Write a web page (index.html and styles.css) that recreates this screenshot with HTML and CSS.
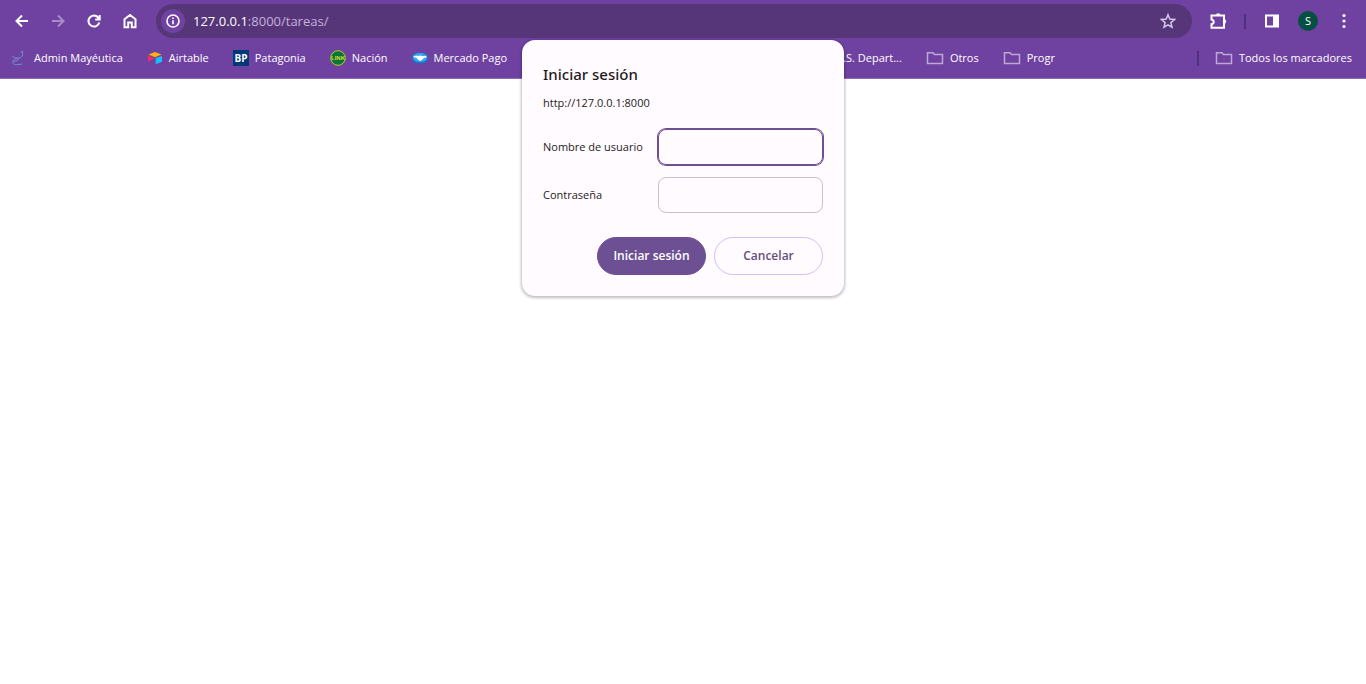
FILE: index.html
```html
<!DOCTYPE html>
<html lang="es">
<head>
<meta charset="utf-8">
<title>Iniciar sesión</title>
<link rel="stylesheet" href="styles.css">
</head>
<body>
<header class="chrome">
  <div class="toolbar">
    <nav class="nav">
      <button class="icon-btn" aria-label="Atrás"><svg viewBox="0 0 16 16"><path d="M14 8H3M8 2.500 2.500 8 8 13.500"/></svg></button>
      <button class="icon-btn dim" aria-label="Adelante"><svg viewBox="0 0 16 16"><path d="M2 8h11M8 2.500 13.500 8 8 13.500"/></svg></button>
      <button class="icon-btn" aria-label="Recargar"><svg viewBox="0 0 16 16"><path d="M13.300 9.500A5.500 5.500 0 1 1 12.200 4.500L13.500 6M13.700 2v4.500H9.200"/></svg></button>
      <button class="icon-btn" aria-label="Inicio"><svg viewBox="0 0 16 16"><path d="M2.500 14.200V6.300L8 2l5.500 4.300v7.900H9.800V9.500H6.200v4.700z"/></svg></button>
    </nav>
    <div class="omnibox">
      <button class="info" aria-label="Información del sitio"><svg viewBox="0 0 16 16"><circle cx="8" cy="8" r="6"/><path d="M8 7.300v4M8 4.500v1.600"/></svg></button>
      <span class="url"><b>127.0.0.1</b>:8000/tareas/</span>
      <button class="icon-btn star" aria-label="Agregar a marcadores"><svg viewBox="0 0 16 16"><path d="m8 1.800 1.800 4.300 4.700.4-3.600 3.100 1.100 4.600L8 11.800l-4 2.400 1.100-4.600L1.500 6.500l4.700-.4z"/></svg></button>
    </div>
    <div class="tools">
      <button class="icon-btn puzzle" aria-label="Extensiones"><svg viewBox="0 0 18 18"><path d="M2.500 3.500H15v12.300H2.500v-3.600c3-.6 3-4.200 0-4.800z"/><path class="solid" d="M7 3.500a2.200 2.200 0 0 1 4.400 0zM15 7.300a2.200 2.200 0 0 1 0 4.400z"/></svg></button>
      <span class="rule"></span>
      <button class="icon-btn panel" aria-label="Panel lateral"><svg viewBox="0 0 16 16"><path d="M2 2.500h12v11H2z"/><path class="solid" d="M9 2h5.500v12H9z"/></svg></button>
      <button class="avatar" aria-label="Perfil">S</button>
      <button class="icon-btn menu" aria-label="Menú"><svg viewBox="0 0 16 16"><circle cx="8" cy="2.500" r="1.600"/><circle cx="8" cy="8" r="1.600"/><circle cx="8" cy="13.500" r="1.600"/></svg></button>
    </div>
  </div>
  <div class="bookmarks">
    <nav class="marks">
      <a href="#"><svg class="swirl" viewBox="0 0 18 16"><path d="M10.500 2.200l2.500-1.200M12.300 1.800c1.300 3.500-.8 6.200-4.300 6.400-2.500.1-4.800-.7-5.500-2.200M7.500 8.500C4.500 8.500 2 11 3 13.200c1 2 5 1.500 9 .8M9 8.300c-1 2-3 3.200-5.500 3.200"/></svg>Admin Mayéutica</a>
      <a href="#"><svg viewBox="0 0 16 16"><path fill="#fcb400" d="M1.500 4.500 8 2l6.500 2.500L8 7.200z"/><path fill="#18bfff" d="M8.700 8.300 15 6v5.800l-6.300 2.400z"/><path fill="#f82b60" d="M1 5.800l6.300 2.500L1 11.800z"/></svg>Airtable</a>
      <a href="#"><svg viewBox="0 0 16 16"><path fill="#003878" d="M0 0h16v16H0z"/><text class="bp" x="8" y="12" text-anchor="middle">BP</text></svg>Patagonia</a>
      <a href="#"><svg viewBox="0 0 16 16"><circle cx="8" cy="8" r="7.300" fill="#08753a" stroke="#b8cf28"/><text class="lk" x="8" y="10.200" text-anchor="middle">LINK</text></svg>Nación</a>
      <a href="#"><svg viewBox="0 0 16 16"><ellipse cx="8" cy="8" rx="8" ry="5.500" fill="#1377cf"/><ellipse cx="8" cy="7.500" rx="7.200" ry="4.500" fill="#39a5ec"/><path fill="#fff" d="M1.500 5.800c2 .6 3-.3 5 .2l1.500-.6 2 .5c2 .1 3 .4 4.500-.1l-.5 1.600c-2 0-2.500 1.400-3.800 2.300L8 10.900 5.800 9.500C4.800 8 4 7.400 2 7.300z"/></svg>Mercado Pago</a>
    </nav>
    <nav class="marks folders">
      <a href="#">U.S. Depart...</a>
      <a href="#"><svg class="folder" viewBox="0 0 18 16"><path d="M1.500 2.800h5.500l1.500 1.800h8v8.800h-15z"/></svg>Otros</a>
      <a href="#"><svg class="folder" viewBox="0 0 18 16"><path d="M1.500 2.800h5.500l1.500 1.800h8v8.800h-15z"/></svg>Progr</a>
    </nav>
    <span class="rule"></span>
    <nav class="marks"><a href="#"><svg class="folder" viewBox="0 0 18 16"><path d="M1.500 2.800h5.500l1.500 1.800h8v8.800h-15z"/></svg>Todos los marcadores</a></nav>
  </div>
</header>
<form class="dialog" role="dialog" aria-labelledby="title">
  <h1 id="title">Iniciar sesión</h1>
  <p>http://127.0.0.1:8000</p>
  <div class="field"><label for="user">Nombre de usuario</label><input id="user" class="active" type="text"></div>
  <div class="field"><label for="pass">Contraseña</label><input id="pass" type="password"></div>
  <div class="actions">
    <button class="pill primary" type="submit">Iniciar sesión</button>
    <button class="pill" type="button">Cancelar</button>
  </div>
</form>
</body>
</html>
```

FILE: styles.css
```css
* { box-sizing: border-box; }
body { margin: 0; background: #fff; font: 11px/16px "Open Sans", "Noto Sans", sans-serif; }
button { border: 0; padding: 0; background: none; font: inherit; color: inherit; }
svg { width: 16px; height: 16px; flex: none; display: block; }
.chrome { background: #6f42a1; color: #fff; border-bottom: 1px solid #8e69b5; }
.toolbar { display: flex; align-items: center; height: 42px; padding: 0 12px; }
.nav { display: flex; gap: 16px; padding-right: 16px; }
.icon-btn { width: 20px; height: 20px; display: grid; place-items: center; }
.icon-btn svg { fill: none; stroke: currentColor; stroke-width: 2; }
.icon-btn .solid { fill: currentColor; stroke: none; }
.dim { color: #a98acb; }
.omnibox { flex: 1; height: 34px; display: flex; align-items: center; border-radius: 17px; background: #563679; padding: 0 14px 0 5px; }
.info { width: 24px; height: 24px; border-radius: 50%; background: #6f42a1; display: grid; place-items: center; }
.info svg { fill: none; stroke: #fff; stroke-width: 1.600; }
.url { flex: 1; padding-left: 8px; font-size: 13px; line-height: 20px; color: #c5b0dc; }
.url b { font-weight: 400; color: #fff; }
.star { color: #d5c6e6; }
.star svg { stroke-width: 1.500; }
.tools { display: flex; align-items: center; gap: 16px; padding-left: 16px; }
.puzzle svg { width: 18px; height: 18px; }
.rule { width: 2px; height: 15px; background: #50307a; }
.avatar { width: 20px; height: 20px; border-radius: 50%; background: #064f42; }
.menu svg { fill: #fff; stroke: none; }
.bookmarks { display: flex; align-items: center; height: 36px; padding: 0 14px 4px 10px; }
.marks { display: flex; align-items: center; gap: 24px; }
.marks a { display: flex; align-items: center; gap: 6px; color: #fff; text-decoration: none; white-space: nowrap; }
.folders { flex: 1; justify-content: flex-end; padding-right: 142px; }
.bookmarks > .rule { margin-right: 16px; }
.folder { width: 18px; fill: none; stroke: #bda7d5; stroke-width: 1.500; }
.swirl { width: 18px; fill: none; stroke: #7490dc; }
.bp { font: 700 10px "Open Sans", sans-serif; fill: #fff; }
.lk { font: 700 6px "Liberation Sans", sans-serif; fill: #d4df27; }
.dialog { position: absolute; top: 40px; left: 50%; width: 322px; margin-left: -161px; padding: 24px 21px 21px; border-radius: 13px; background: #fffbff; color: #1f1b22; box-shadow: 0 1px 3px 1px #00000040; }
.dialog h1 { margin: 0 0 11px; font: 500 15px/20px "Noto Sans", sans-serif; }
.dialog p { margin: 0 0 18px; }
.field { display: flex; align-items: center; justify-content: space-between; margin-bottom: 12px; }
.field input { width: 165px; height: 36px; border: 1px solid #cbbfce; border-radius: 8px; background: transparent; padding: 0 10px; font: inherit; outline: 0; }
.field .active { border-color: #6d4f93; box-shadow: 0 0 0 1px #6d4f93; }
.actions { display: flex; justify-content: flex-end; gap: 8px; padding-top: 12px; }
.pill { width: 109px; height: 38px; border: 1px solid #d5bfef; border-radius: 19px; color: #62507a; font-size: 12px; font-weight: 600; }
.primary { background: #6d4f93; border-color: #6d4f93; color: #fff; }
```
